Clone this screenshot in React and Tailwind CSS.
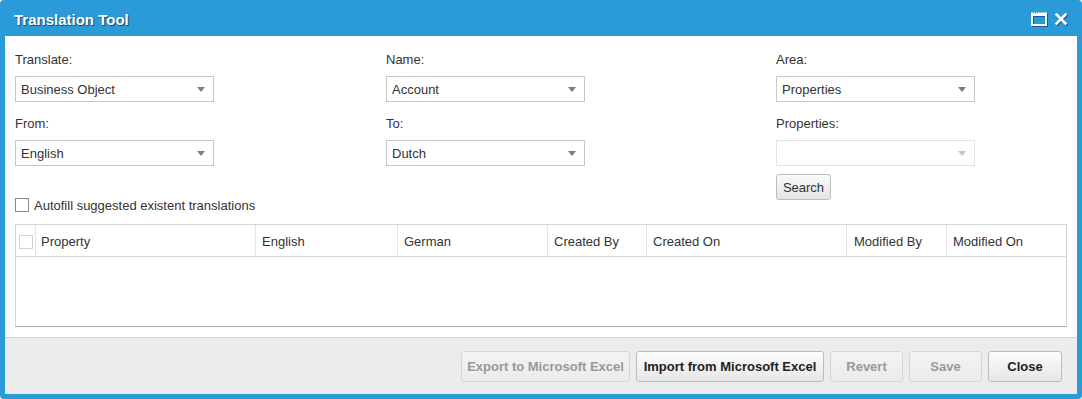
import React from 'react'

function Select({ value, disabled }) {
  return (
    <div
      className={`w-[199px] h-[26px] bg-white border flex items-center pl-[5px] pt-[2px] ${
        disabled ? 'border-[#e2e2e2]' : 'border-[#c8c8c8]'
      }`}
    >
      <span className="text-[13px] leading-4 text-[#333]">{value}</span>
      <span
        className={`ml-auto mr-[8px] -mt-[2px] w-0 h-0 border-l-[4px] border-r-[4px] border-t-[5px] border-l-transparent border-r-transparent ${
          disabled ? 'border-t-[#c4c4c4]' : 'border-t-[#7d7d7d]'
        }`}
      />
    </div>
  )
}

function Field({ label, value, disabled, first }) {
  return (
    <div className={first ? '' : 'mt-[14px]'}>
      <div className="text-[13px] leading-4 text-[#333] mb-2">{label}</div>
      <Select value={value} disabled={disabled} />
    </div>
  )
}

function FooterButton({ children, disabled, width }) {
  return (
    <button
      className={`${width} h-[31px] rounded-[3px] border text-[13px] leading-4 font-bold flex items-center justify-center pt-[1px] ${
        disabled
          ? 'border-[#d6d6d6] bg-gradient-to-b from-[#f3f3f3] to-[#ebebeb] text-[#999]'
          : 'border-[#bcbcbc] bg-gradient-to-b from-[#fdfdfd] to-[#e6e6e6] text-[#222]'
      }`}
    >
      {children}
    </button>
  )
}

const columns = [
  { title: 'Property', w: 'w-[220px]', pl: 'pl-[5px]' },
  { title: 'English', w: 'w-[142px]', pl: 'pl-[6px]' },
  { title: 'German', w: 'w-[150px]', pl: 'pl-[6px]' },
  { title: 'Created By', w: 'w-[99px]', pl: 'pl-[6px]' },
  { title: 'Created On', w: 'w-[200px]', pl: 'pl-[6px]' },
  { title: 'Modified By', w: 'w-[100px]', pl: 'pl-[7px]' },
]

export default function App() {
  return (
    <div className="w-[1082px] h-[399px] bg-[#2a9bd8] rounded-[4px] flex flex-col px-[5px] pb-[5px] font-['Liberation_Sans',Arial,sans-serif]">
      {/* title bar */}
      <div className="h-[36px] shrink-0 flex items-start">
        <div className="pl-[9px] pt-[10px] text-[15px] leading-[20px] font-bold text-white [text-shadow:1px_1px_1px_rgba(0,0,0,0.55)]">
          Translation Tool
        </div>
        <div className="ml-auto flex items-start gap-[8px] pr-[10px] pt-[12px] [filter:drop-shadow(1px_1px_0_rgba(0,40,80,0.55))]">
          <svg width="16" height="14" viewBox="0 0 16 14">
            <rect x="1" y="1.5" width="14" height="11.5" fill="none" stroke="white" strokeWidth="2" />
            <rect x="1" y="1" width="14" height="3" fill="white" />
            <rect x="2" y="0.5" width="1" height="1" fill="#2a9bd8" />
            <rect x="4" y="0.5" width="1" height="1" fill="#2a9bd8" />
            <rect x="6" y="0.5" width="1" height="1" fill="#2a9bd8" />
          </svg>
          <svg width="12" height="12" viewBox="0 0 12 12" className="mt-[1px]">
            <path d="M1.5 1.5L10.5 10.5M10.5 1.5L1.5 10.5" stroke="white" strokeWidth="2.6" strokeLinecap="square" />
          </svg>
        </div>
      </div>

      {/* body */}
      <div className="h-[301px] shrink-0 bg-white px-[10px] pt-[16px]">
        <div className="flex items-start">
          <div className="w-[371px]">
            <Field first label="Translate:" value="Business Object" />
            <Field label="From:" value="English" />
            <label className="mt-[31px] h-4 flex items-center">
              <span className="w-[14px] h-[14px] border border-[#888] bg-white" />
              <span className="ml-[5px] pt-[1px] text-[13px] leading-4 text-[#333]">
                Autofill suggested existent translations
              </span>
            </label>
          </div>
          <div className="w-[390px]">
            <Field first label="Name:" value="Account" />
            <Field label="To:" value="Dutch" />
          </div>
          <div>
            <Field first label="Area:" value="Properties" />
            <Field label="Properties:" value="" disabled />
            <button className="mt-2 w-[55px] h-[26px] rounded-[3px] border border-[#bdbdbd] bg-gradient-to-b from-[#fafafa] to-[#e4e4e4] pt-[1px] text-[13px] leading-4 text-[#333]">
              Search
            </button>
          </div>
        </div>

        {/* grid */}
        <div className="mt-[11px] h-[103px] border border-[#d6d6d6] border-b-[#a9a9a9] flex flex-col">
          <div className="h-[32px] shrink-0 border-b border-[#dadada] flex">
            <div className="w-[20px] border-r border-[#e3e3e3] pt-[10px] pl-[3px]">
              <div className="w-[14px] h-[14px] border border-[#d2d2d2] bg-white" />
            </div>
            {columns.map((c) => (
              <div
                key={c.title}
                className={`${c.w} ${c.pl} shrink-0 border-r border-[#e3e3e3] pt-[9px] text-[13px] leading-4 text-[#333]`}
              >
                {c.title}
              </div>
            ))}
            <div className="flex-1 pl-[6px] pt-[9px] text-[13px] leading-4 text-[#333]">Modified On</div>
          </div>
          <div className="flex-1" />
        </div>
      </div>

      {/* footer */}
      <div className="h-[57px] shrink-0 border-t border-[#d4d4d4] bg-[#ececec] flex justify-end items-start pt-[13px] pr-[15px] gap-[6px]">
        <FooterButton disabled width="w-[169px]">Export to Microsoft Excel</FooterButton>
        <FooterButton width="w-[188px]">Import from Microsoft Excel</FooterButton>
        <FooterButton disabled width="w-[73px]">Revert</FooterButton>
        <FooterButton disabled width="w-[73px]">Save</FooterButton>
        <FooterButton width="w-[74px]">Close</FooterButton>
      </div>
    </div>
  )
}
